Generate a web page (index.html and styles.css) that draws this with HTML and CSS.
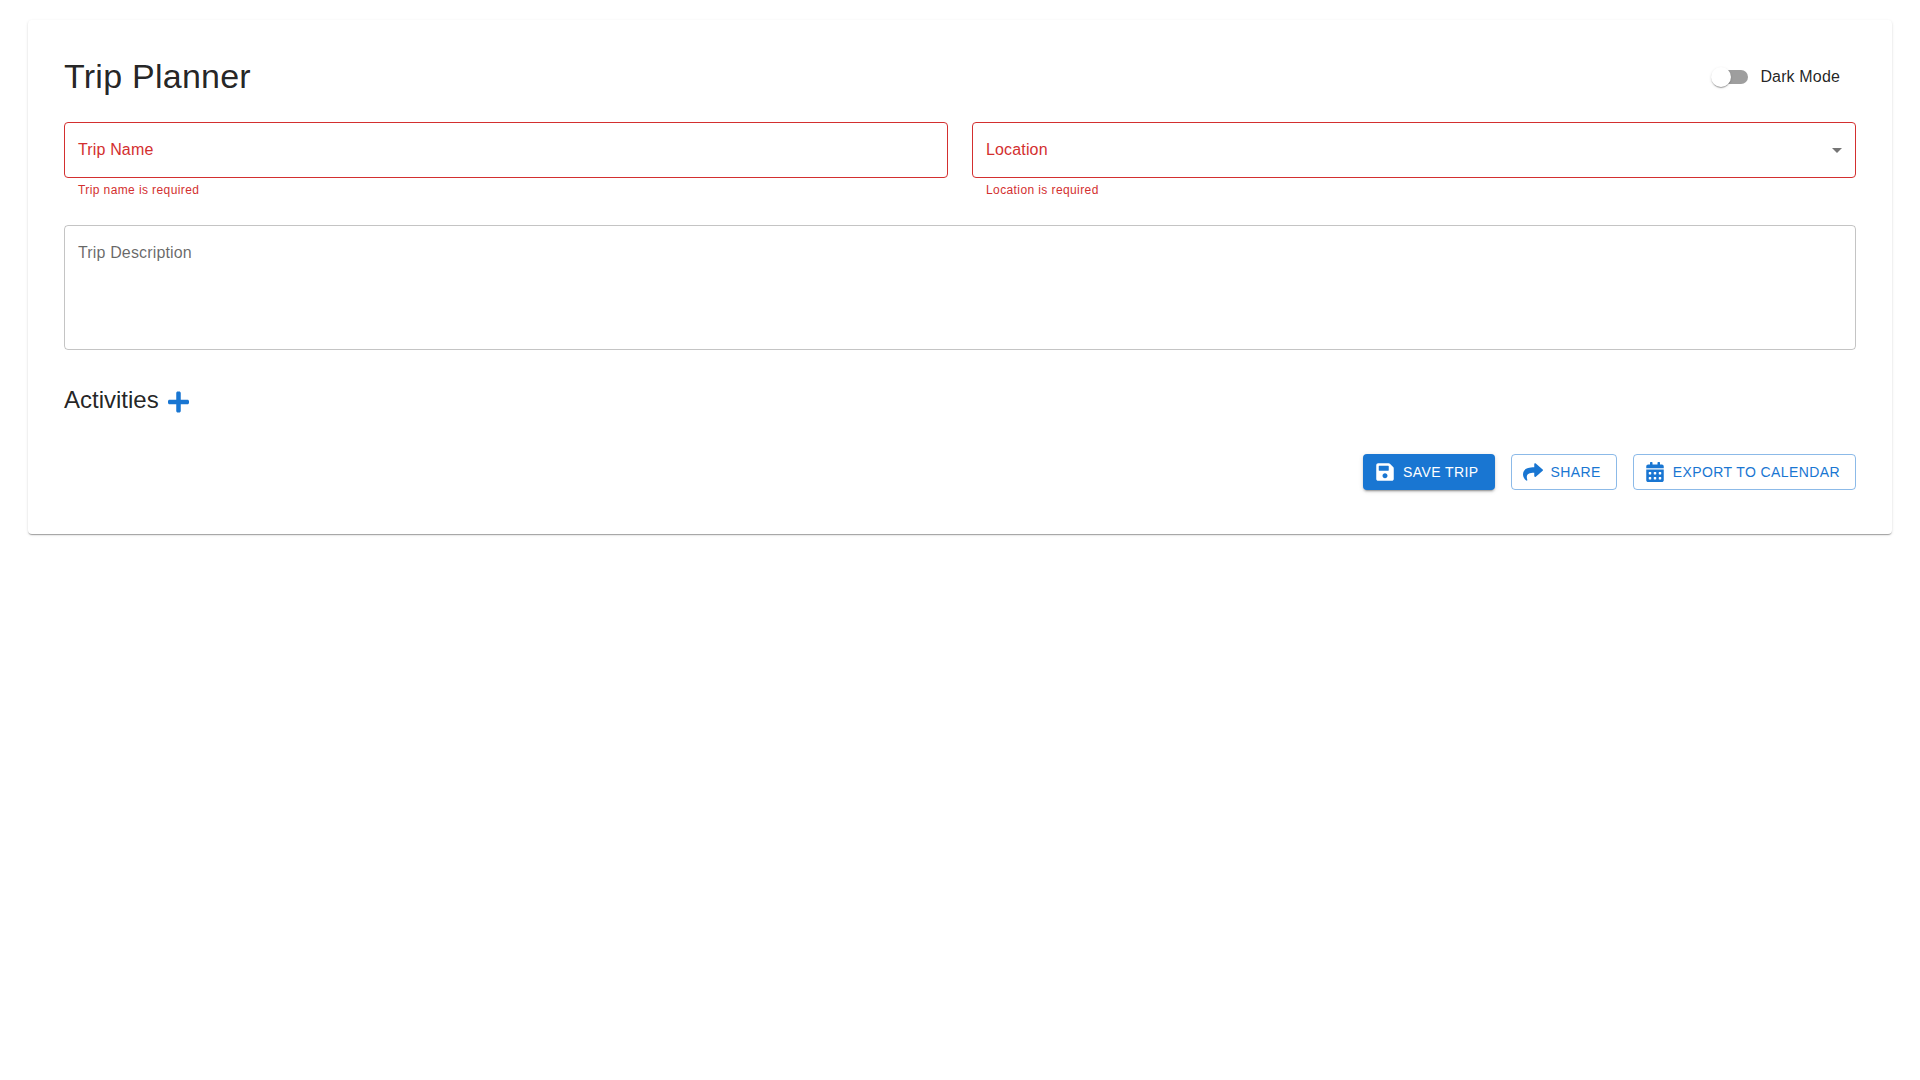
FILE: index.html
```html
<!DOCTYPE html>
<html lang="en">
<head>
<meta charset="utf-8">
<title>Trip Planner</title>
<link rel="stylesheet" href="styles.css">
</head>
<body>
<main class="page">
  <section class="paper">
    <header class="top">
      <h1 class="title">Trip Planner</h1>
      <label class="toggle">
        <span class="switch"><span class="track"></span><span class="thumb"></span></span>
        <span class="toggle-label">Dark Mode</span>
      </label>
    </header>
    <div class="row">
      <div class="field">
        <div class="box error"><span class="label">Trip Name</span></div>
        <p class="helper">Trip name is required</p>
      </div>
      <div class="field">
        <div class="box error select"><span class="label">Location</span>
          <svg class="caret" viewBox="0 0 24 24"><path d="M7 10l5 5 5-5z"/></svg>
        </div>
        <p class="helper">Location is required</p>
      </div>
    </div>
    <div class="box area"><span class="label">Trip Description</span></div>
    <div class="activities">
      <h2 class="subtitle">Activities</h2>
      <svg class="plus" viewBox="0 0 448 512"><path d="M416 208H272V64c0-17.67-14.33-32-32-32h-32c-17.67 0-32 14.33-32 32v144H32c-17.67 0-32 14.33-32 32v32c0 17.67 14.33 32 32 32h144v144c0 17.67 14.33 32 32 32h32c17.67 0 32-14.33 32-32V304h144c17.67 0 32-14.33 32-32v-32c0-17.67-14.33-32-32-32z"/></svg>
    </div>
    <div class="actions">
      <button class="btn primary">
        <svg class="ico" viewBox="0 0 448 512"><path d="M433.941 129.941l-83.882-83.882A48 48 0 0 0 316.118 32H48C21.49 32 0 53.49 0 80v352c0 26.51 21.49 48 48 48h352c26.51 0 48-21.49 48-48V163.882a48 48 0 0 0-14.059-33.941zM224 416c-35.346 0-64-28.654-64-64 0-35.346 28.654-64 64-64s64 28.654 64 64c0 35.346-28.654 64-64 64zm96-304.52V212c0 6.627-5.373 12-12 12H76c-6.627 0-12-5.373-12-12V108c0-6.627 5.373-12 12-12h228.52c3.183 0 6.235 1.264 8.485 3.515l3.48 3.48A11.996 11.996 0 0 1 320 111.48z"/></svg>
        Save Trip
      </button>
      <button class="btn outlined">
        <svg class="ico" viewBox="0 0 512 512"><path d="M503.691 189.836L327.687 37.851C312.281 24.546 288 35.347 288 56.015v80.053C127.371 137.907 0 170.1 0 322.326c0 61.441 39.581 122.309 83.333 154.132 13.653 9.931 33.111-2.533 28.077-18.631C66.066 312.814 132.917 274.316 288 272.085V360c0 20.7 24.3 31.453 39.687 18.164l176.004-152c11.071-9.562 11.086-26.753 0-36.328z"/></svg>
        Share
      </button>
      <button class="btn outlined">
        <svg class="ico" viewBox="0 0 448 512"><path d="M0 464c0 26.5 21.5 48 48 48h352c26.5 0 48-21.5 48-48V192H0v272zm320-196c0-6.6 5.4-12 12-12h40c6.6 0 12 5.4 12 12v40c0 6.6-5.4 12-12 12h-40c-6.6 0-12-5.4-12-12v-40zm0 128c0-6.6 5.4-12 12-12h40c6.6 0 12 5.4 12 12v40c0 6.6-5.4 12-12 12h-40c-6.6 0-12-5.4-12-12v-40zM192 268c0-6.6 5.4-12 12-12h40c6.6 0 12 5.4 12 12v40c0 6.6-5.4 12-12 12h-40c-6.6 0-12-5.4-12-12v-40zm0 128c0-6.6 5.4-12 12-12h40c6.6 0 12 5.4 12 12v40c0 6.6-5.4 12-12 12h-40c-6.6 0-12-5.4-12-12v-40zM64 268c0-6.6 5.4-12 12-12h40c6.6 0 12 5.4 12 12v40c0 6.6-5.4 12-12 12H76c-6.6 0-12-5.4-12-12v-40zm0 128c0-6.6 5.4-12 12-12h40c6.6 0 12 5.4 12 12v40c0 6.6-5.4 12-12 12H76c-6.6 0-12-5.4-12-12v-40zM400 64h-48V16c0-8.8-7.2-16-16-16h-32c-8.8 0-16 7.2-16 16v48H160V16c0-8.8-7.2-16-16-16h-32c-8.8 0-16 7.2-16 16v48H48C21.5 64 0 85.5 0 112v48h448v-48c0-26.5-21.5-48-48-48z"/></svg>
        Export to Calendar
      </button>
    </div>
  </section>
</main>
</body>
</html>
```
FILE: styles.css
```css
* { box-sizing: border-box; }
html, body { margin: 0; height: 100%; }
body { background: #fff; color: rgba(0,0,0,.87); font-family: "Liberation Sans", Arial, sans-serif; }
.page { padding: 20px 28px; }
.paper {
  background: #fff;
  border-radius: 4px;
  padding: 36px;
  box-shadow: 0 2px 1px -1px rgba(0,0,0,.2), 0 1px 1px 0 rgba(0,0,0,.14), 0 1px 3px 0 rgba(0,0,0,.12);
  display: flex;
  flex-direction: column;
  height: 514px;
}
.top { display: flex; justify-content: space-between; align-items: center; height: 42px; margin-bottom: 24px; }
.title { margin: -2px 0 0; font-size: 34px; font-weight: 400; line-height: 42px; letter-spacing: .25px; }
.toggle { display: flex; align-items: center; margin-right: 16px; }
.switch { position: relative; display: block; width: 34px; height: 20px; margin: 0 12px 0 12px; }
.track { position: absolute; left: 0; top: 3px; width: 34px; height: 14px; border-radius: 7px; background: #9e9e9e; }
.thumb { position: absolute; left: -3px; top: 0; width: 20px; height: 20px; border-radius: 50%; background: #fff;
  box-shadow: 0 2px 1px -1px rgba(0,0,0,.2), 0 1px 1px 0 rgba(0,0,0,.14), 0 1px 3px 0 rgba(0,0,0,.12); }
.toggle-label { font-size: 16px; line-height: 24px; letter-spacing: .15px; }
.row { display: grid; grid-template-columns: 1fr 1fr; column-gap: 24px; }
.box {
  display: flex; align-items: center; height: 56px; padding: 0 13px;
  border: 1px solid rgba(0,0,0,.23); border-radius: 4px; font-size: 16px; color: rgba(0,0,0,.6);
}
.label { line-height: 24px; letter-spacing: .15px; }
.box.error { border-color: #d32f2f; color: #d32f2f; }
.select { justify-content: space-between; padding-right: 6px; }
.caret { width: 24px; height: 24px; fill: rgba(0,0,0,.54); }
.helper { margin: 2px 14px 1px; font-size: 12px; line-height: 20px; letter-spacing: .4px; color: #d32f2f; }
.area { margin-top: 24px; height: 125px; align-items: flex-start; padding-top: 15px; }
.activities { display: flex; align-items: center; margin-top: 33px; gap: 9px; height: 34px; }
.subtitle { margin: 0; font-size: 24px; font-weight: 400; line-height: 32px; }
.plus { width: 21px; height: 24px; fill: #1976d2; margin-top: 3px; }
.actions { display: flex; justify-content: flex-end; gap: 16px; margin-top: 37px; }
.btn {
  display: flex; align-items: center; height: 36px; padding: 0 15px 0 11px; border-radius: 4px;
  font-family: "Liberation Sans", Arial, sans-serif; font-size: 14px; font-weight: 400; letter-spacing: .4px; text-transform: uppercase;
}
.btn.primary { background: #1976d2; color: #fff; border: 0; padding: 0 16px 0 12px;
  box-shadow: 0 3px 1px -2px rgba(0,0,0,.2), 0 2px 2px 0 rgba(0,0,0,.14), 0 1px 5px 0 rgba(0,0,0,.12); }
.btn.outlined { background: transparent; color: #1976d2; border: 1px solid rgba(25,118,210,.5); }
.ico { width: 20px; height: 20px; margin-right: 8px; fill: currentColor; }
```
